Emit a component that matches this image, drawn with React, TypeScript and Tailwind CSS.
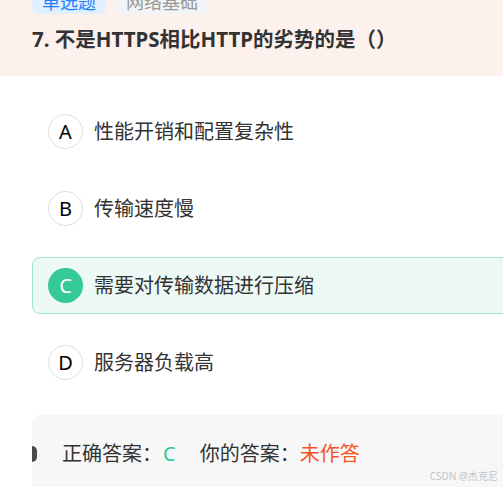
import React from 'react';

const options = [
  { key: 'A', text: '性能开销和配置复杂性' },
  { key: 'B', text: '传输速度慢' },
  { key: 'C', text: '需要对传输数据进行压缩', correct: true },
  { key: 'D', text: '服务器负载高' },
];

export default function App() {
  return (
    <div
      className="relative w-[503px] h-[487px] overflow-hidden bg-white text-[#333]"
      style={{ fontFamily: '"Noto Sans", "Noto Sans CJK SC", sans-serif' }}
    >
      {/* Question header */}
      <div className="h-[76px] bg-[#fdf1ed] pl-8 flex flex-col">
        <div className="flex gap-[10px] -mt-[11px]">
          <span className="h-[25px] px-[10px] pt-[4px] rounded-md bg-[#e1f0ff] text-[#1e80ff] text-[18px] leading-[18px]">单选题</span>
          <span className="h-[25px] px-[10px] pt-[4px] rounded-md bg-[#f2f4f7] text-[#999] text-[18px] leading-[18px]">网络基础</span>
        </div>
        <h2 className="mt-[12px] text-[20.5px] leading-[26px] font-bold text-[#333]">7. 不是HTTPS相比HTTP的劣势的是（）</h2>
      </div>

      {/* Options */}
      <div className="w-[600px] pl-8 pt-[27px] flex flex-col gap-5">
        {options.map((o) => (
          <div
            key={o.key}
            className={`h-[57px] flex items-center gap-[11px] pl-[15px] rounded-lg border ${
              o.correct ? 'bg-[#edf9f5] border-[#9fe4c8]' : 'bg-white border-transparent'
            }`}
          >
            <div
              className={`w-[35px] h-[35px] rounded-full flex items-center justify-center text-[20px] ${
                o.correct ? 'bg-[#34c997] text-white' : 'bg-white border border-[#dedede] text-black'
              }`}
            >
              {o.key}
            </div>
            <span className="text-[20px] text-[#333]">{o.text}</span>
          </div>
        ))}
      </div>

      {/* Answer box */}
      <div className="ml-8 mt-[24px] w-[600px] h-[120px] bg-[#f7f7f7] rounded-tl-lg pt-[30px]">
        <div className="flex items-center h-[17px]">
          <div className="w-[5px] h-[16px] rounded-r-full bg-[#4a4a4a]" />
          <div className="ml-[25px] flex items-center text-[20px] leading-[24px] text-[#333]">
            <span>正确答案：</span>
            <span className="text-[#30c995] ml-[1px]">C</span>
            <span className="ml-[24px]">你的答案：</span>
            <span className="text-[#f5551e]">未作答</span>
          </div>
        </div>
      </div>

      <span className="absolute right-[5px] bottom-[3px] text-[10px] text-[#c4c4c4]">CSDN @杰克尼</span>
    </div>
  );
}
